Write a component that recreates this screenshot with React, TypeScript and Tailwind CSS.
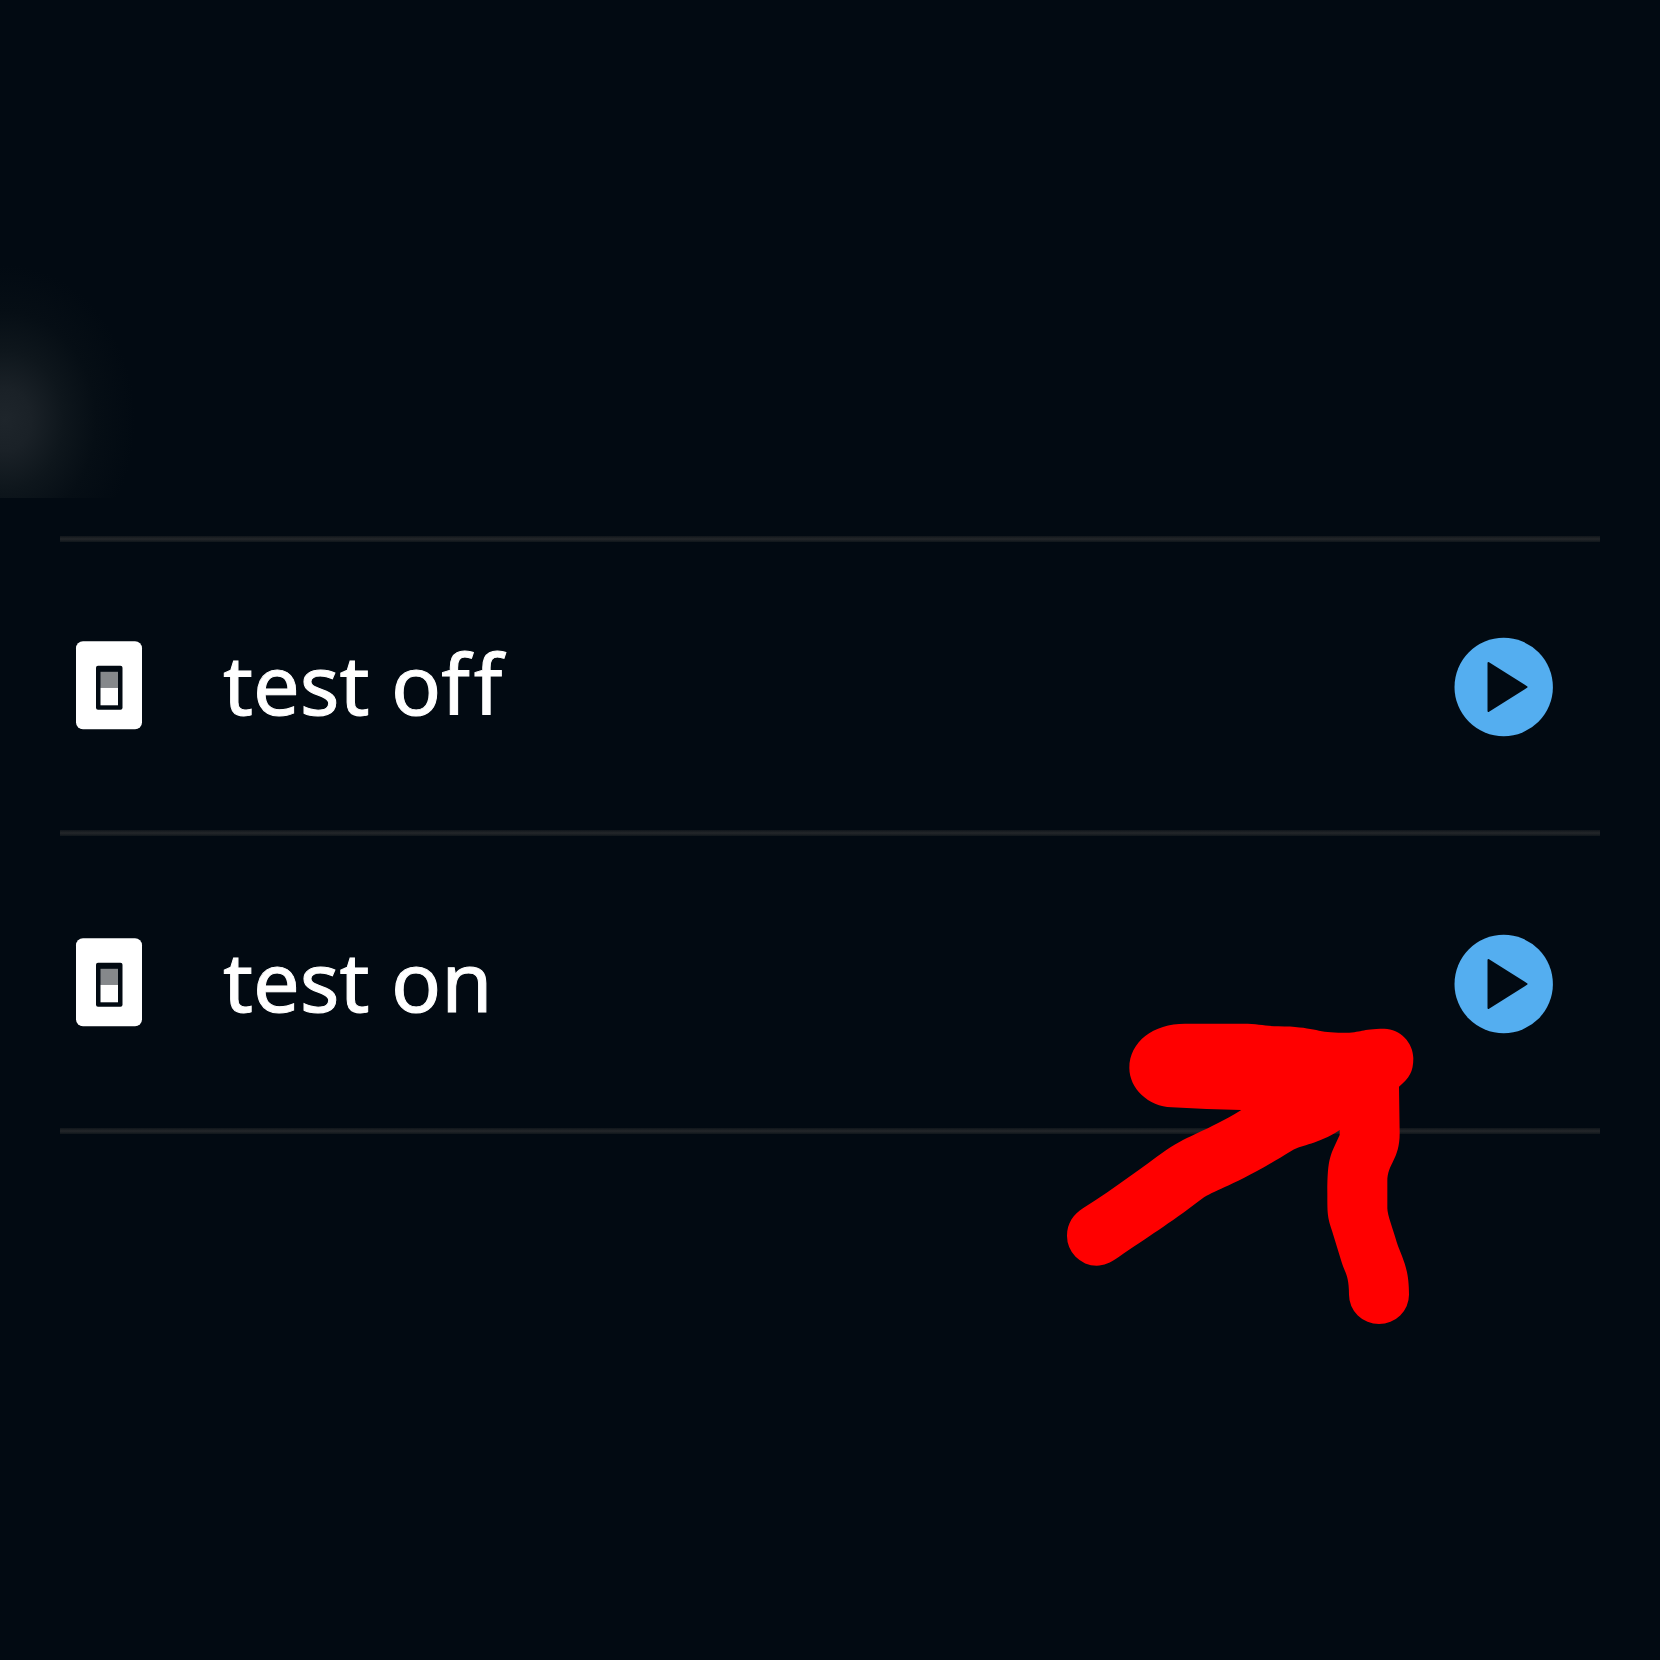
import React from "react";

interface props {
  name: React.ReactNode;
  className?: string;
}

const SwitchIcon = () => (
  <svg width="68" height="90" viewBox="0 0 68 90" fill="none">
    <rect x="1" y="1.3" width="66" height="88" rx="7" fill="#fff" />
    <rect x="21" y="25.8" width="26.5" height="44" rx="2" fill="#020a12" />
    <rect x="25.5" y="31.8" width="17.5" height="16" fill="#85888b" />
    <rect x="25.5" y="47.8" width="17.5" height="17.5" fill="#fff" />
  </svg>
);

const PlayIcon = () => (
  <svg width="100" height="100" viewBox="0 0 100 100">
    <circle cx="49.7" cy="50" r="49.2" fill="#54aef0" />
    <path
      d="M34.5 26 L72.5 50 L34.5 74 Z"
      fill="#020a12"
      stroke="#020a12"
      strokeWidth="2"
      strokeLinejoin="round"
    />
  </svg>
);

const Divider = () => (
  <div className="h-[6px] bg-linear-to-b from-[#10161b] via-[#24272a] to-[#10161b]" />
);

const SceneRow = ({ name, className }: props) => {
  return (
    <li className={`flex items-center pl-[15px] pr-[46px] ${className}`}>
      <SwitchIcon />
      <span className="mb-[3px] ml-[80px] grow font-['Noto_Sans',sans-serif] text-[83px] leading-[100px] text-white [-webkit-text-stroke:1px_white] [font-variant-ligatures:none]">
        {name}
      </span>
      <button className="mt-[5px]" aria-label="play">
        <PlayIcon />
      </button>
    </li>
  );
};

const Arrow = () => (
  <svg
    className="pointer-events-none absolute left-[1050px] top-[1000px]"
    width="400"
    height="350"
    viewBox="0 0 1200 1050"
    fill="#f00"
  >
    <path d="M405 71 H580 C625 71 650 79 685 79 C790 80 800 98 865 98 C940 100 925 86 1003 86 C1050 86 1090 128 1090 175 C1090 215 1078 235 1047 260 L1049 400 C1049 480 1012 490 1012 545 V625 C1012 645 1030 690 1040 726 C1056 775 1077 800 1077 884 A90 88 0 0 1 897 884 C897 825 885 820 875 787 L846 692 C832 650 832 640 832 580 C832 470 842 465 869 405 V390 C800 435 760 432 725 452 C540 566 500 565 455 597 C350 677 300 706 205 772 C180 789 162 797 140 797 A89 89 0 0 1 51 707 C51 670 70 643 100 624 C200 560 270 506 350 449 C420 403 465 396 574 330 Q470 328 365 322 C295 320 238 265 238 204 C238 125 310 71 405 71 Z" />
  </svg>
);

const App = () => {
  return (
    <div className="relative h-[1660px] w-[1660px] overflow-hidden bg-[#020a12]">
      <div className="h-[498px] bg-[radial-gradient(ellipse_130px_155px_at_5px_420px,#1e252b_0%,#1a2127_20%,#0e161c_45%,#060e15_70%,#020a12_100%)]" />
      <div className="mx-[60px] mt-[38px]">
        <Divider />
        <ul>
          <SceneRow
            name={
              <>
                test o<span className="tracking-[4px]">f</span>f
              </>
            }
            className="h-[288px] pb-[3px]"
          />
          <Divider />
          <SceneRow name="test on" className="h-[292px] pb-px" />
        </ul>
        <Divider />
      </div>
      <Arrow />
    </div>
  );
};

export default App;
